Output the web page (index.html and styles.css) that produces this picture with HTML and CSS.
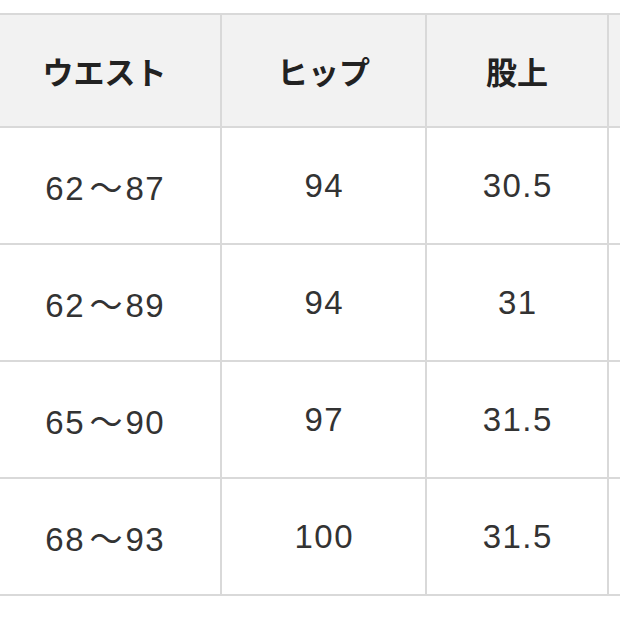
FILE: index.html
```html
<!DOCTYPE html>
<html lang="ja">
<head>
<meta charset="utf-8">
<link rel="stylesheet" href="styles.css">
</head>
<body>
<div class="frame">
<table class="size-table">
  <thead>
    <tr><th class="c1">ウエスト</th><th class="c2">ヒップ</th><th class="c3">股上</th><th class="c4"></th></tr>
  </thead>
  <tbody>
    <tr><td>62<span class="tilde">～</span>87</td><td>94</td><td>30.5</td><td></td></tr>
    <tr><td>62<span class="tilde">～</span>89</td><td>94</td><td>31</td><td></td></tr>
    <tr><td>65<span class="tilde">～</span>90</td><td>97</td><td>31.5</td><td></td></tr>
    <tr><td>68<span class="tilde">～</span>93</td><td>100</td><td>31.5</td><td></td></tr>
  </tbody>
</table>
</div>
</body>
</html>
```
FILE: styles.css
```css
html, body {
  margin: 0;
  padding: 0;
  background: #ffffff;
}
.frame {
  width: 620px;
  height: 620px;
  overflow: hidden;
  padding-top: 13px;
  box-sizing: border-box;
}
.size-table {
  margin-left: -13px;
  border-collapse: collapse;
  table-layout: fixed;
  width: 700px;
  font-family: "Liberation Sans", "Noto Sans CJK JP", sans-serif;
  color: #333333;
}
.size-table th,
.size-table td {
  border: 2px solid #d9d9d9;
  text-align: center;
  vertical-align: middle;
  padding: 0;
}
.size-table th {
  background: #f2f2f2;
  height: 111px;
  font-family: "Noto Sans CJK JP", sans-serif;
  font-weight: 700;
  font-size: 31px;
  color: #222222;
}
.size-table td {
  height: 115px;
  font-size: 33px;
  font-weight: 400;
  letter-spacing: 1.5px;
  text-indent: 1.5px;
}
.tilde {
  display: inline-block;
  margin: 0 3px;
  letter-spacing: 0;
}
.c1 { width: 231px; }
.c2 { width: 203px; }
.c3 { width: 180px; }
.c4 { width: 86px; }
```
